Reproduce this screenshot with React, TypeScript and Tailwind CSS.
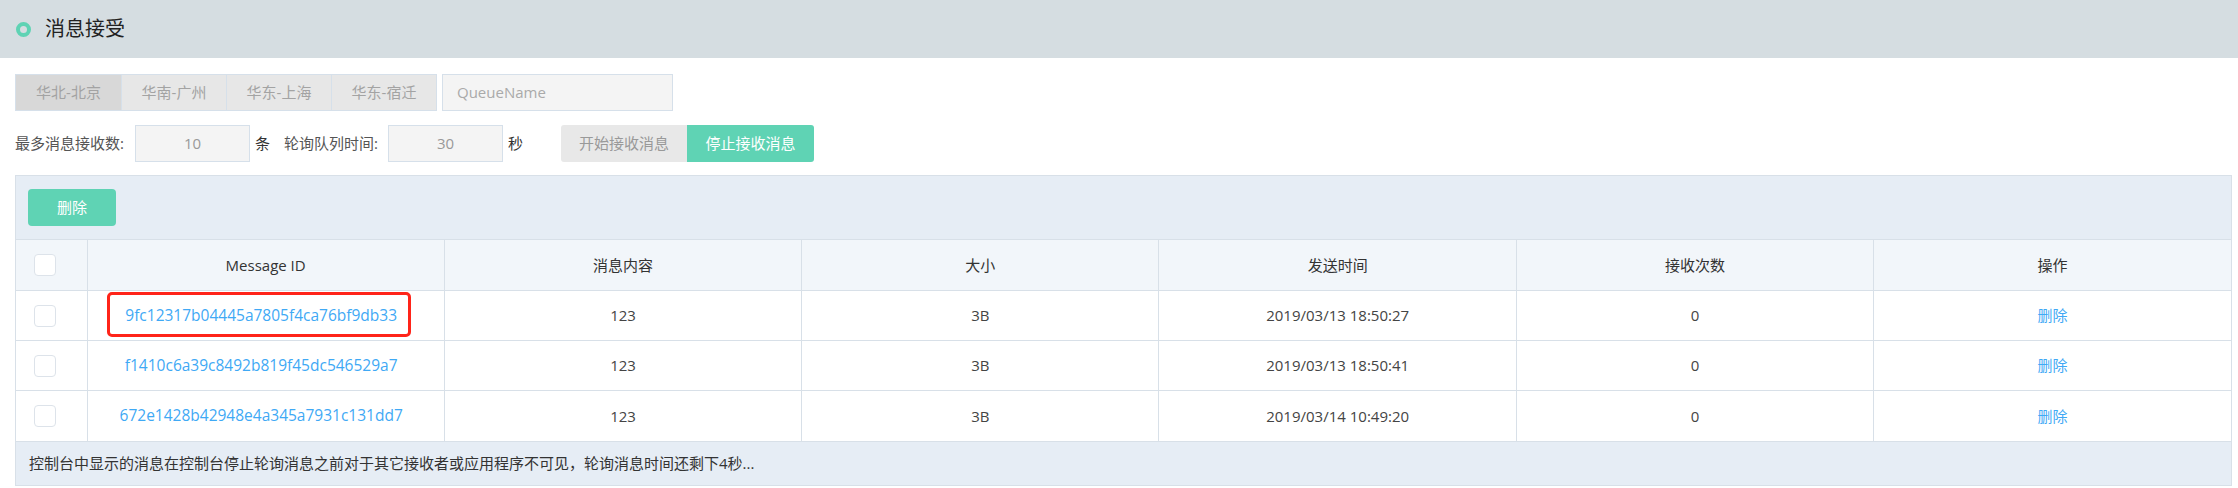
const FONT = { fontFamily: '"Open Sans", "Noto Sans CJK SC", sans-serif' };

const regions = ["华北-北京", "华南-广州", "华东-上海", "华东-宿迁"];

const rows = [
  { id: "9fc12317b04445a7805f4ca76bf9db33", body: "123", size: "3B", time: "2019/03/13 18:50:27", count: "0", marked: true },
  { id: "f1410c6a39c8492b819f45dc546529a7", body: "123", size: "3B", time: "2019/03/13 18:50:41", count: "0" },
  { id: "672e1428b42948e4a345a7931c131dd7", body: "123", size: "3B", time: "2019/03/14 10:49:20", count: "0" },
];

function Checkbox() {
  return <div className="ml-[18px] w-[22px] h-[22px] rounded-[4px] border border-[#dde3ea] bg-white" />;
}

export default function App() {
  return (
    <div className="w-[2238px] h-[488px] bg-white overflow-hidden text-[15px]" style={FONT}>
      {/* Title bar */}
      <div className="h-[58px] bg-[#d5dde1] flex items-center pl-[16px] gap-[14px]">
        <span className="w-[15px] h-[15px] rounded-full border-[4px] border-[#5fd3b4]" />
        <span className="text-[20px] text-[#222]">消息接受</span>
      </div>

      <div className="pl-[15px]">
        {/* Region tabs + queue name */}
        <div className="mt-[16px] flex items-center gap-[5px]">
          <div className="flex border border-[#d6e0ea] h-[37px]">
            {regions.map((r, i) => (
              <div
                key={r}
                className={`w-[105px] flex items-center justify-center text-[#a3a3a3] ${i === 0 ? "bg-[#d8d8d8]" : "bg-[#e7e7e7]"} ${i > 0 ? "border-l border-[#d6e0ea]" : ""}`}
              >
                {r}
              </div>
            ))}
          </div>
          <div className="w-[231px] h-[37px] border border-[#d6e0ea] bg-[#f4f4f4] flex items-center pl-[14px] text-[#aaa]">
            QueueName
          </div>
        </div>

        {/* Polling settings */}
        <div className="mt-[14px] flex items-center h-[37px] text-[#555]">
          <span className="w-[120px]">最多消息接收数:</span>
          <div className="w-[115px] h-[37px] border border-[#d6e0ea] bg-[#f4f4f4] flex items-center justify-center text-[#999]">10</div>
          <span className="ml-[5px] text-[#333]">条</span>
          <span className="ml-[14px] w-[104px]">轮询队列时间:</span>
          <div className="w-[115px] h-[37px] border border-[#d6e0ea] bg-[#f4f4f4] flex items-center justify-center text-[#999]">30</div>
          <span className="ml-[5px] text-[#333]">秒</span>
          <div className="ml-[38px] flex h-[37px] rounded-[3px] overflow-hidden">
            <div className="w-[126px] bg-[#e8e8e8] text-[#999] flex items-center justify-center">开始接收消息</div>
            <div className="w-[127px] bg-[#5fd3b4] text-white flex items-center justify-center">停止接收消息</div>
          </div>
        </div>

        {/* Message table panel */}
        <div className="mt-[13px] w-[2217px] border border-[#d8e0e8] bg-[#e6edf5]">
          <div className="h-[63px] flex items-center pl-[12px]">
            <button className="w-[88px] h-[37px] rounded-[4px] bg-[#5fd3b4] text-white">删除</button>
          </div>
          <table className="w-full table-fixed border-collapse">
            <colgroup>
              <col className="w-[71px]" />
              <col />
              <col />
              <col />
              <col />
              <col />
              <col />
            </colgroup>
            <thead>
              <tr className="h-[51px] bg-[#f2f6fa] text-[#333]">
                <th className="border-t border-[#d8e0e8] font-normal"><Checkbox /></th>
                {["Message ID", "消息内容", "大小", "发送时间", "接收次数", "操作"].map((h) => (
                  <th key={h} className="border-t border-l border-[#d8e0e8] font-normal">{h}</th>
                ))}
              </tr>
            </thead>
            <tbody>
              {rows.map((r) => (
                <tr key={r.id} className="h-[50px] bg-white text-[#444]">
                  <td className="border-t border-[#d8e0e8]"><Checkbox /></td>
                  <td className="border-t border-l border-[#d8e0e8] text-center pr-[9px]">
                    <span className="relative text-[15.5px] text-[#3fa9f5]">
                      {r.id}
                      {r.marked && (
                        <span className="absolute left-[-18px] right-[-14px] top-[-12px] bottom-[-11px] border-[3px] border-[#ff2419] rounded-[5px]" />
                      )}
                    </span>
                  </td>
                  <td className="border-t border-l border-[#d8e0e8] text-center">{r.body}</td>
                  <td className="border-t border-l border-[#d8e0e8] text-center">{r.size}</td>
                  <td className="border-t border-l border-[#d8e0e8] text-center">{r.time}</td>
                  <td className="border-t border-l border-[#d8e0e8] text-center">{r.count}</td>
                  <td className="border-t border-l border-[#d8e0e8] text-center text-[#3fa9f5]">删除</td>
                </tr>
              ))}
            </tbody>
          </table>
          <div className="h-[44px] border-t border-[#d8e0e8] flex items-center pl-[13px] text-[#333]">
            控制台中显示的消息在控制台停止轮询消息之前对于其它接收者或应用程序不可见，轮询消息时间还剩下4秒...
          </div>
        </div>
      </div>
    </div>
  );
}
